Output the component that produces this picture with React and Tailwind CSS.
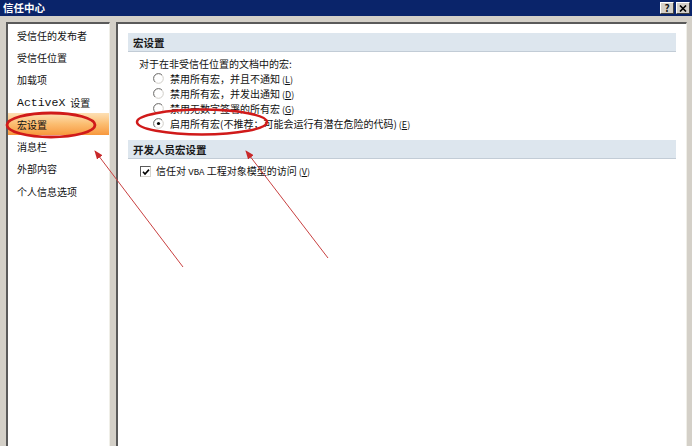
import React from "react";

const navItems = [
  "受信任的发布者",
  "受信任位置",
  "加载项",
  "ActiveX 设置",
  "宏设置",
  "消息栏",
  "外部内容",
  "个人信息选项",
];

const radios = [
  { label: "禁用所有宏，并且不通知", key: "L" },
  { label: "禁用所有宏，并发出通知", key: "D" },
  { label: "禁用无数字签署的所有宏", key: "G" },
  { label: "启用所有宏(不推荐；可能会运行有潜在危险的代码)", key: "E", checked: true },
];

function Radio({ checked }) {
  return (
    <svg width="11" height="11" viewBox="0 0 11 11" className="shrink-0">
      <circle cx="5.5" cy="5.5" r="4.8" fill="#ffffff" stroke="#cfcdc7" strokeWidth="1" />
      <path d="M9 2 A4.8 4.8 0 0 0 2 9" stroke="#7a7a7a" strokeWidth="1" fill="none" />
      {checked && <circle cx="5.5" cy="5.5" r="1.6" fill="#000000" />}
    </svg>
  );
}

function Checkbox() {
  return (
    <div className="w-[11px] h-[11px] shrink-0 bg-white border-t border-l border-[#5a5a5a] border-r border-b border-r-[#d8d6d0] border-b-[#d8d6d0] flex items-center justify-center">
      <svg width="8" height="8" viewBox="0 0 8 8">
        <path d="M1 3.8 L3 6 L7 1.6" stroke="#000" strokeWidth="1.6" fill="none" />
      </svg>
    </div>
  );
}

function Accel({ k }) {
  return (
    <span className="text-[9px] ml-[2px]">
      (<span className="underline">{k}</span>)
    </span>
  );
}

function SectionHeader({ children }) {
  return (
    <div className="h-[19px] bg-[#dde6ee] border-b border-[#c2ccd6] flex items-center pl-[5px] font-bold text-[10.5px] leading-[19px] text-[#1a1a1a]">
      {children}
    </div>
  );
}

export default function App() {
  return (
    <div
      className="relative w-[692px] h-[446px] overflow-hidden bg-[#d4d0c8] flex flex-col text-[10px] leading-[15px] text-[#111]"
      style={{ fontFamily: '"Noto Sans CJK SC", "Liberation Sans", sans-serif' }}
    >
      {/* title bar */}
      <div className="h-[16px] bg-[#0a246a] flex items-center justify-between pl-[3px] pr-[2px] shrink-0">
        <span className="text-white font-bold text-[10.5px] leading-none">信任中心</span>
        <div className="flex gap-[2px]">
          <div className="w-[14px] h-[12px] bg-[#d4d0c8] border-t border-l border-white border-r border-b border-r-[#404040] border-b-[#404040] flex items-center justify-center text-[10px] font-bold leading-none">
            ?
          </div>
          <div className="w-[14px] h-[12px] bg-[#d4d0c8] border-t border-l border-white border-r border-b border-r-[#404040] border-b-[#404040] flex items-center justify-center">
            <svg width="8" height="7" viewBox="0 0 8 7">
              <path d="M1 0.5 L7 6.5 M7 0.5 L1 6.5" stroke="#000" strokeWidth="1.6" />
            </svg>
          </div>
        </div>
      </div>

      {/* body */}
      <div className="flex flex-1 pt-[6px] pl-[6px] pr-[5px] gap-[6px]">
        {/* left nav */}
        <div className="w-[104px] h-[440px] bg-white border-t-2 border-l-2 border-[#5a5a5a] border-r border-r-[#f0efe8]">
          {navItems.map((item) => {
            const active = item === "宏设置";
            return (
              <div
                key={item}
                className={
                  active
                    ? "h-[22.3px] flex items-center pl-[9px] bg-gradient-to-b from-[#fde0b4] via-[#fbbd70] to-[#f7983c]"
                    : "h-[22.3px] flex items-center pl-[9px]"
                }
              >
                {item === "ActiveX 设置" ? (
                  <>
                    <span className="text-[11.5px] mr-[5px]" style={{ fontFamily: '"Liberation Mono", monospace' }}>
                      ActiveX
                    </span>
                    设置
                  </>
                ) : (
                  item
                )}
              </div>
            );
          })}
        </div>

        {/* right content */}
        <div className="flex-1 h-[440px] bg-white border-t-2 border-l-2 border-[#5a5a5a] border-r border-r-[#f0efe8] px-[10px] pt-[9px]">
          <SectionHeader>宏设置</SectionHeader>
          <div className="mt-[4px] pl-[11px]">
            <div className="h-[15px]">对于在非受信任位置的文档中的宏:</div>
            {radios.map((r) => (
              <div key={r.key} className="flex items-center h-[15px] pl-[14px] gap-[6px]">
                <Radio checked={r.checked} />
                <span className="leading-[15px]">
                  {r.label}
                  <Accel k={r.key} />
                </span>
              </div>
            ))}
          </div>
          <div className="mt-[9px]">
            <SectionHeader>开发人员宏设置</SectionHeader>
          </div>
          <div className="mt-[5px] pl-[12px] flex items-center gap-[5px] h-[15px]">
            <Checkbox />
            <span className="leading-[15px]">
              信任对{" "}
              <span className="text-[9px]" style={{ fontFamily: '"Liberation Mono", monospace' }}>
                VBA
              </span>{" "}
              工程对象模型的访问
              <Accel k="V" />
            </span>
          </div>
        </div>
      </div>

      {/* annotations */}
      <svg className="absolute inset-0 pointer-events-none" width="692" height="446">
        <defs>
          <marker id="ah" markerWidth="9" markerHeight="7" refX="8" refY="3.5" orient="auto" markerUnits="userSpaceOnUse">
            <path d="M0 0 L9 3.5 L0 7 Z" fill="#c8282a" />
          </marker>
        </defs>
        <ellipse cx="51" cy="125" rx="44" ry="12" fill="none" stroke="#d01a1a" strokeWidth="2.8" />
        <ellipse cx="202" cy="122" rx="65" ry="12.5" fill="none" stroke="#d01a1a" strokeWidth="2.5" />
        <line x1="183" y1="267" x2="95" y2="151" stroke="#c84040" strokeWidth="1" markerEnd="url(#ah)" />
        <line x1="328" y1="258" x2="246" y2="151" stroke="#c84040" strokeWidth="1" markerEnd="url(#ah)" />
      </svg>
    </div>
  );
}
